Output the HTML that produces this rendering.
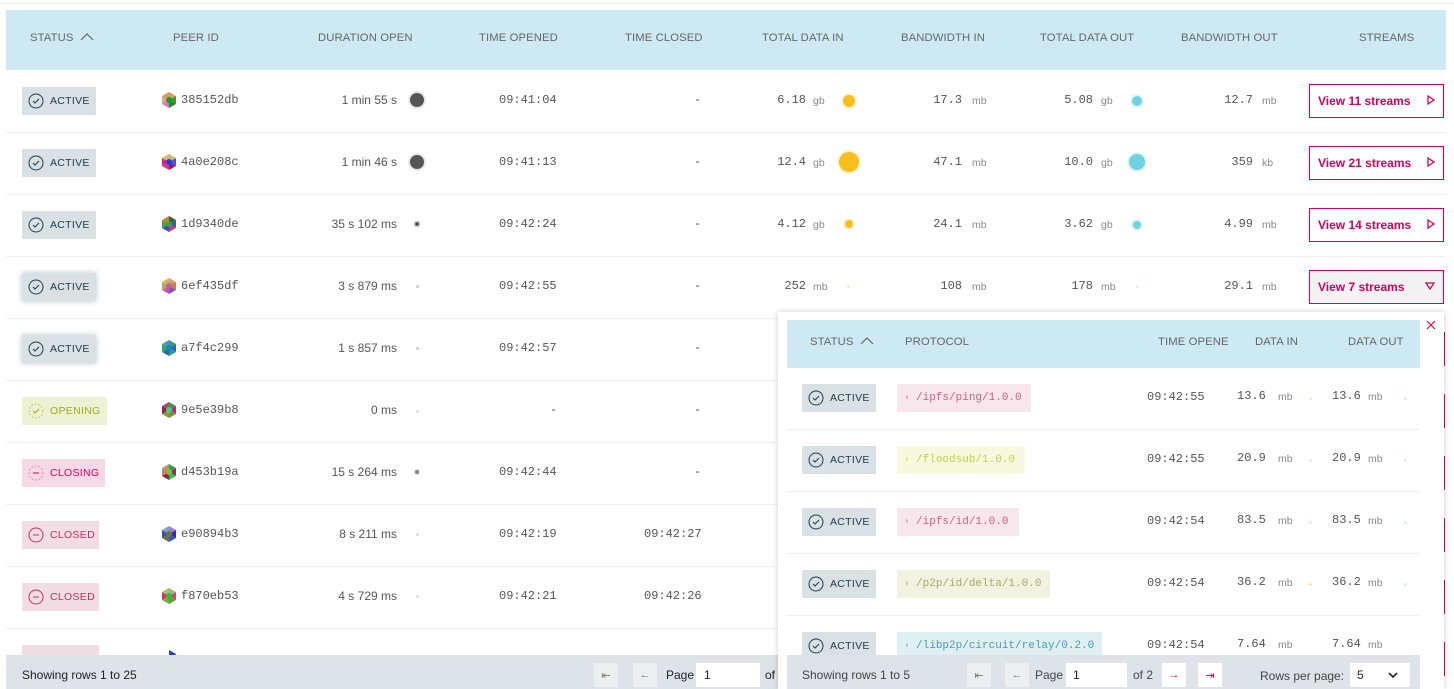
<!DOCTYPE html>
<html><head><meta charset="utf-8">
<style>
*{box-sizing:border-box;margin:0;padding:0}
body{width:1454px;height:689px;overflow:hidden;background:#fff;font-family:"Liberation Sans",sans-serif;position:relative;color:#555}
.a{position:absolute;white-space:nowrap}
.h{font-size:11.3px;color:#666;letter-spacing:.1px}
.r{text-align:right;width:200px}
.m{font-family:"Liberation Mono",monospace;font-size:12px;color:#555}
.u{font-size:10.5px;color:#888}
.s{font-size:12px;color:#555}
.line{position:absolute;height:1px;background:#eef0f2}
.badge{position:absolute;height:28px;font-size:10.5px;display:flex;align-items:center;padding-left:6px;letter-spacing:.3px}
.badge svg{margin-right:6px}
.act{background:#d9e1e5;color:#1e3a4a}
.dot{position:absolute;border-radius:50%}
.btn{position:absolute;left:1309px;width:135px;height:34px;border:1px solid #d5005d;color:#d5005d;font-size:12px;font-weight:bold;display:flex;align-items:center;padding-left:8px}
.btn span{position:absolute;right:8px;font-size:11px;font-weight:normal}
.tag{position:absolute;height:28px;font-family:"Liberation Mono",monospace;font-size:11px;display:flex;align-items:center;padding-left:7px}
.tag i{font-style:normal;margin-right:6px;font-size:10px}
.pb{position:absolute;width:24px;height:24px;background:#eceef0;font-size:11px;display:flex;align-items:center;justify-content:center;color:#777}
</style></head><body>
<div class="line" style="left:0;top:3px;width:1454px;background:#eee"></div>
<div class="a" style="left:6px;top:10px;width:1440px;height:60px;background:#cde9f3"></div>
<div class="a h" style="left:30px;top:32px">STATUS <svg width="14" height="9" style="margin-left:3px"><path d="M1 8L7 2L13 8" fill="none" stroke="#666" stroke-width="1.2"/></svg></div>
<div class="a h" style="left:173px;top:32px">PEER ID</div>
<div class="a h" style="left:318px;top:32px">DURATION OPEN</div>
<div class="a h" style="left:479px;top:32px">TIME OPENED</div>
<div class="a h" style="left:625px;top:32px">TIME CLOSED</div>
<div class="a h" style="left:762px;top:32px">TOTAL DATA IN</div>
<div class="a h" style="left:901px;top:32px">BANDWIDTH IN</div>
<div class="a h" style="left:1040px;top:32px">TOTAL DATA OUT</div>
<div class="a h" style="left:1181px;top:32px">BANDWIDTH OUT</div>
<div class="a h" style="left:1359px;top:32px">STREAMS</div>

<div class="line" style="left:6px;top:132px;width:1440px"></div>
<div class="line" style="left:6px;top:194px;width:1440px"></div>
<div class="line" style="left:6px;top:256px;width:1440px"></div>
<div class="line" style="left:6px;top:318px;width:1440px"></div>
<div class="line" style="left:6px;top:380px;width:1440px"></div>
<div class="line" style="left:6px;top:442px;width:1440px"></div>
<div class="line" style="left:6px;top:504px;width:1440px"></div>
<div class="line" style="left:6px;top:566px;width:1440px"></div>
<div class="line" style="left:6px;top:628px;width:1440px"></div>

<div class="badge act" style="left:22px;top:87px;width:74px"><svg width="16" height="16"><circle cx="8" cy="8" r="7" fill="none" stroke="#1e3a4a"/><path d="M5 8l2 2 4-4" fill="none" stroke="#1e3a4a"/></svg>ACTIVE</div>
<div class="badge act" style="left:22px;top:149px;width:74px"><svg width="16" height="16"><circle cx="8" cy="8" r="7" fill="none" stroke="#1e3a4a"/><path d="M5 8l2 2 4-4" fill="none" stroke="#1e3a4a"/></svg>ACTIVE</div>
<div class="badge act" style="left:22px;top:211px;width:74px"><svg width="16" height="16"><circle cx="8" cy="8" r="7" fill="none" stroke="#1e3a4a"/><path d="M5 8l2 2 4-4" fill="none" stroke="#1e3a4a"/></svg>ACTIVE</div>
<div class="badge act" style="left:22px;top:273px;width:74px;box-shadow:0 0 6px #b8c4cc"><svg width="16" height="16"><circle cx="8" cy="8" r="7" fill="none" stroke="#1e3a4a"/><path d="M5 8l2 2 4-4" fill="none" stroke="#1e3a4a"/></svg>ACTIVE</div>
<div class="badge act" style="left:22px;top:335px;width:74px;box-shadow:0 0 6px #b8c4cc"><svg width="16" height="16"><circle cx="8" cy="8" r="7" fill="none" stroke="#1e3a4a"/><path d="M5 8l2 2 4-4" fill="none" stroke="#1e3a4a"/></svg>ACTIVE</div>
<div class="badge" style="left:22px;top:397px;width:85px;background:#eef2d5;color:#9aad10"><svg width="16" height="16"><circle cx="8" cy="8" r="7" fill="none" stroke="#b5c040" stroke-dasharray="1.5 2"/><path d="M5 8l2 2 4-4" fill="none" stroke="#9aad10"/></svg>OPENING</div>
<div class="badge" style="left:22px;top:459px;width:83px;background:#f7d9e6;color:#d5005d"><svg width="16" height="16"><circle cx="8" cy="8" r="7" fill="none" stroke="#e07aa5" stroke-dasharray="1.5 2"/><path d="M5 8h6" stroke="#d5005d"/></svg>CLOSING</div>
<div class="badge" style="left:22px;top:521px;width:77px;background:#f3dde5;color:#c0305f"><svg width="16" height="16"><circle cx="8" cy="8" r="7" fill="none" stroke="#c0305f"/><path d="M5 8h6" stroke="#c0305f"/></svg>CLOSED</div>
<div class="badge" style="left:22px;top:583px;width:77px;background:#f3dde5;color:#c0305f"><svg width="16" height="16"><circle cx="8" cy="8" r="7" fill="none" stroke="#c0305f"/><path d="M5 8h6" stroke="#c0305f"/></svg>CLOSED</div>
<div class="badge" style="left:22px;top:645px;width:77px;background:#f3dde5;color:#c0305f"></div>

<div class="a" style="left:161px;top:92px"><svg width="16" height="16"><path d="M8 8L8 0L15 4Z" fill="#d4a060"/><path d="M8 8L15 4L15 12Z" fill="#3a9a30"/><path d="M8 8L15 12L8 16Z" fill="#2a8a20"/><path d="M8 8L8 16L1 12Z" fill="#e070d0"/><path d="M8 8L1 12L1 4Z" fill="#e8a080"/><path d="M8 8L1 4L8 0Z" fill="#c0a070"/><circle cx="8" cy="8" r="3" fill="#1a9a30"/></svg></div>
<div class="a m" style="left:181px;top:93px">385152db</div>
<div class="a" style="left:161px;top:154px"><svg width="16" height="16"><path d="M8 8L8 0L15 4Z" fill="#c8c060"/><path d="M8 8L15 4L15 12Z" fill="#5050d0"/><path d="M8 8L15 12L8 16Z" fill="#902050"/><path d="M8 8L8 16L1 12Z" fill="#e030a0"/><path d="M8 8L1 12L1 4Z" fill="#e02080"/><path d="M8 8L1 4L8 0Z" fill="#d0c060"/><circle cx="8" cy="8" r="3" fill="#2040e0"/></svg></div>
<div class="a m" style="left:181px;top:155px">4a0e208c</div>
<div class="a" style="left:161px;top:216px"><svg width="16" height="16"><path d="M8 8L8 0L15 4Z" fill="#2a6a30"/><path d="M8 8L15 4L15 12Z" fill="#5050b0"/><path d="M8 8L15 12L8 16Z" fill="#c04080"/><path d="M8 8L8 16L1 12Z" fill="#3050d0"/><path d="M8 8L1 12L1 4Z" fill="#50a040"/><path d="M8 8L1 4L8 0Z" fill="#d08030"/><circle cx="8" cy="8" r="3" fill="#40a040"/></svg></div>
<div class="a m" style="left:181px;top:217px">1d9340de</div>
<div class="a" style="left:161px;top:278px"><svg width="16" height="16"><path d="M8 8L8 0L15 4Z" fill="#d0a070"/><path d="M8 8L15 4L15 12Z" fill="#e07050"/><path d="M8 8L15 12L8 16Z" fill="#8050c0"/><path d="M8 8L8 16L1 12Z" fill="#d050b0"/><path d="M8 8L1 12L1 4Z" fill="#c0a060"/><path d="M8 8L1 4L8 0Z" fill="#e0b060"/><circle cx="8" cy="8" r="3" fill="#a07090"/></svg></div>
<div class="a m" style="left:181px;top:279px">6ef435df</div>
<div class="a" style="left:161px;top:340px"><svg width="16" height="16"><path d="M8 8L8 0L15 4Z" fill="#30a060"/><path d="M8 8L15 4L15 12Z" fill="#4060c0"/><path d="M8 8L15 12L8 16Z" fill="#20a080"/><path d="M8 8L8 16L1 12Z" fill="#3060c0"/><path d="M8 8L1 12L1 4Z" fill="#20b060"/><path d="M8 8L1 4L8 0Z" fill="#5090c0"/><circle cx="8" cy="8" r="3" fill="#2080c0"/></svg></div>
<div class="a m" style="left:181px;top:341px">a7f4c299</div>
<div class="a" style="left:161px;top:402px"><svg width="16" height="16"><path d="M8 8L8 0L15 4Z" fill="#30a050"/><path d="M8 8L15 4L15 12Z" fill="#d02080"/><path d="M8 8L15 12L8 16Z" fill="#6a9a30"/><path d="M8 8L8 16L1 12Z" fill="#8a9a30"/><path d="M8 8L1 12L1 4Z" fill="#902050"/><path d="M8 8L1 4L8 0Z" fill="#c04060"/><circle cx="8" cy="8" r="3" fill="#40d080"/></svg></div>
<div class="a m" style="left:181px;top:403px">9e5e39b8</div>
<div class="a" style="left:161px;top:464px"><svg width="16" height="16"><path d="M8 8L8 0L15 4Z" fill="#30a050"/><path d="M8 8L15 4L15 12Z" fill="#8a3060"/><path d="M8 8L15 12L8 16Z" fill="#30c040"/><path d="M8 8L8 16L1 12Z" fill="#902040"/><path d="M8 8L1 12L1 4Z" fill="#c08070"/><path d="M8 8L1 4L8 0Z" fill="#c09070"/><circle cx="8" cy="8" r="3" fill="#80c030"/></svg></div>
<div class="a m" style="left:181px;top:465px">d453b19a</div>
<div class="a" style="left:161px;top:526px"><svg width="16" height="16"><path d="M8 8L8 0L15 4Z" fill="#a080d0"/><path d="M8 8L15 4L15 12Z" fill="#3030a0"/><path d="M8 8L15 12L8 16Z" fill="#3050e0"/><path d="M8 8L8 16L1 12Z" fill="#6a7a30"/><path d="M8 8L1 12L1 4Z" fill="#3050c0"/><path d="M8 8L1 4L8 0Z" fill="#80a0d0"/><circle cx="8" cy="8" r="3" fill="#6a7a20"/></svg></div>
<div class="a m" style="left:181px;top:527px">e90894b3</div>
<div class="a" style="left:161px;top:588px"><svg width="16" height="16"><path d="M8 8L8 0L15 4Z" fill="#90c070"/><path d="M8 8L15 4L15 12Z" fill="#e04070"/><path d="M8 8L15 12L8 16Z" fill="#60a030"/><path d="M8 8L8 16L1 12Z" fill="#70b040"/><path d="M8 8L1 12L1 4Z" fill="#e03050"/><path d="M8 8L1 4L8 0Z" fill="#a0c080"/><circle cx="8" cy="8" r="3" fill="#20c040"/></svg></div>
<div class="a m" style="left:181px;top:589px">f870eb53</div>
<div class="a" style="left:161px;top:650px"><svg width="16" height="16"><path d="M8 8L8 0L15 4Z" fill="#3040b0"/><path d="M8 8L15 4L15 12Z" fill="#4050c0"/><circle cx="8" cy="8" r="3" fill="#3050d0"/></svg></div>

<div class="a s r" style="left:197px;top:93px">1 min 55 s</div>
<div class="a s r" style="left:197px;top:155px">1 min 46 s</div>
<div class="a s r" style="left:197px;top:217px">35 s 102 ms</div>
<div class="a s r" style="left:197px;top:279px">3 s 879 ms</div>
<div class="a s r" style="left:197px;top:341px">1 s 857 ms</div>
<div class="a s r" style="left:197px;top:403px">0 ms</div>
<div class="a s r" style="left:197px;top:465px">15 s 264 ms</div>
<div class="a s r" style="left:197px;top:527px">8 s 211 ms</div>
<div class="a s r" style="left:197px;top:589px">4 s 729 ms</div>
<div class="dot" style="left:410px;top:93px;width:14px;height:14px;background:#555;box-shadow:0 0 0 2px #e8e8e8"></div>
<div class="dot" style="left:410px;top:155px;width:14px;height:14px;background:#555;box-shadow:0 0 0 2px #e8e8e8"></div>
<div class="dot" style="left:415px;top:222px;width:4px;height:4px;background:#555;box-shadow:0 0 0 2px #e4e4e4"></div>
<div class="dot" style="left:416px;top:285px;width:3px;height:3px;background:#ccc"></div>
<div class="dot" style="left:416px;top:347px;width:3px;height:3px;background:#ccc"></div>
<div class="dot" style="left:416px;top:410px;width:3px;height:3px;background:#ddd"></div>
<div class="dot" style="left:415px;top:470px;width:4px;height:4px;background:#888;box-shadow:0 0 0 1px #ddd"></div>
<div class="dot" style="left:416px;top:533px;width:3px;height:3px;background:#ddd"></div>
<div class="dot" style="left:416px;top:595px;width:3px;height:3px;background:#ddd"></div>

<div class="a m" style="left:499px;top:93px">09:41:04</div>
<div class="a m" style="left:499px;top:155px">09:41:13</div>
<div class="a m" style="left:499px;top:217px">09:42:24</div>
<div class="a m" style="left:499px;top:279px">09:42:55</div>
<div class="a m" style="left:499px;top:341px">09:42:57</div>
<div class="a m" style="left:550px;top:403px">-</div>
<div class="a m" style="left:499px;top:465px">09:42:44</div>
<div class="a m" style="left:499px;top:527px">09:42:19</div>
<div class="a m" style="left:499px;top:589px">09:42:21</div>
<div class="a m" style="left:694px;top:93px">-</div>
<div class="a m" style="left:694px;top:155px">-</div>
<div class="a m" style="left:694px;top:217px">-</div>
<div class="a m" style="left:694px;top:279px">-</div>
<div class="a m" style="left:694px;top:341px">-</div>
<div class="a m" style="left:694px;top:403px">-</div>
<div class="a m" style="left:694px;top:465px">-</div>
<div class="a m" style="left:644px;top:527px">09:42:27</div>
<div class="a m" style="left:644px;top:589px">09:42:26</div>

<div class="a m r" style="left:606px;top:93px">6.18</div><div class="a u" style="left:813px;top:95px">gb</div>
<div class="a m r" style="left:606px;top:155px">12.4</div><div class="a u" style="left:813px;top:157px">gb</div>
<div class="a m r" style="left:606px;top:217px">4.12</div><div class="a u" style="left:813px;top:219px">gb</div>
<div class="a m r" style="left:606px;top:279px">252</div><div class="a u" style="left:813px;top:281px">mb</div>
<div class="dot" style="left:843px;top:95px;width:12px;height:12px;background:#f8be1c;box-shadow:0 0 0 2px #fdf3d6"></div>
<div class="dot" style="left:839px;top:152px;width:20px;height:20px;background:#f8be1c;box-shadow:0 0 0 2px #fdf3d6"></div>
<div class="dot" style="left:845px;top:220px;width:8px;height:8px;background:#f8be1c;box-shadow:0 0 0 2px #fdf3d6"></div>
<div class="dot" style="left:847px;top:285px;width:3px;height:3px;background:#fbe7b0"></div>

<div class="a m r" style="left:762px;top:93px">17.3</div><div class="a u" style="left:972px;top:95px">mb</div>
<div class="a m r" style="left:762px;top:155px">47.1</div><div class="a u" style="left:972px;top:157px">mb</div>
<div class="a m r" style="left:762px;top:217px">24.1</div><div class="a u" style="left:972px;top:219px">mb</div>
<div class="a m r" style="left:762px;top:279px">108</div><div class="a u" style="left:972px;top:281px">mb</div>

<div class="a m r" style="left:893px;top:93px">5.08</div><div class="a u" style="left:1101px;top:95px">gb</div>
<div class="a m r" style="left:893px;top:155px">10.0</div><div class="a u" style="left:1101px;top:157px">gb</div>
<div class="a m r" style="left:893px;top:217px">3.62</div><div class="a u" style="left:1101px;top:219px">gb</div>
<div class="a m r" style="left:893px;top:279px">178</div><div class="a u" style="left:1101px;top:281px">mb</div>
<div class="dot" style="left:1132px;top:96px;width:10px;height:10px;background:#6fd2e3;box-shadow:0 0 0 2px #e0f5f9"></div>
<div class="dot" style="left:1129px;top:154px;width:16px;height:16px;background:#6fd2e3;box-shadow:0 0 0 2px #e0f5f9"></div>
<div class="dot" style="left:1133px;top:221px;width:8px;height:8px;background:#6fd2e3;box-shadow:0 0 0 2px #e0f5f9"></div>
<div class="dot" style="left:1136px;top:285px;width:3px;height:3px;background:#d8f0f5"></div>

<div class="a m r" style="left:1053px;top:93px">12.7</div><div class="a u" style="left:1262px;top:95px">mb</div>
<div class="a m r" style="left:1053px;top:155px">359</div><div class="a u" style="left:1262px;top:157px">kb</div>
<div class="a m r" style="left:1053px;top:217px">4.99</div><div class="a u" style="left:1262px;top:219px">mb</div>
<div class="a m r" style="left:1053px;top:279px">29.1</div><div class="a u" style="left:1262px;top:281px">mb</div>

<div class="btn" style="top:84px">View 11 streams<span><svg width="8" height="10"><path d="M1 1L7 5L1 9Z" fill="none" stroke="#d5005d" stroke-width="1.3"/></svg></span></div>
<div class="btn" style="top:146px">View 21 streams<span><svg width="8" height="10"><path d="M1 1L7 5L1 9Z" fill="none" stroke="#d5005d" stroke-width="1.3"/></svg></span></div>
<div class="btn" style="top:208px">View 14 streams<span><svg width="8" height="10"><path d="M1 1L7 5L1 9Z" fill="none" stroke="#d5005d" stroke-width="1.3"/></svg></span></div>
<div class="btn" style="top:270px;background:#f2f2f2">View 7 streams<span><svg width="10" height="8"><path d="M1 1L9 1L5 7Z" fill="none" stroke="#d5005d" stroke-width="1.3"/></svg></span></div>
<div class="a" style="left:1443px;top:332px;width:2px;height:34px;background:#d5005d"></div>
<div class="a" style="left:1443px;top:394px;width:2px;height:34px;background:#d5005d"></div>
<div class="a" style="left:1443px;top:456px;width:2px;height:34px;background:#d5005d"></div>
<div class="a" style="left:1443px;top:518px;width:2px;height:34px;background:#d5005d"></div>
<div class="a" style="left:1443px;top:580px;width:2px;height:34px;background:#d5005d"></div>
<div class="a" style="left:1443px;top:642px;width:2px;height:34px;background:#d5005d"></div>

<div class="a" style="left:6px;top:655px;width:780px;height:34px;background:#dde3e8"></div>
<div class="a" style="left:22px;top:668px;font-size:12px;color:#222">Showing rows 1 to 25</div>
<div class="pb" style="left:594px;top:663px">⇤</div>
<div class="pb" style="left:633px;top:663px">←</div>
<div class="a" style="left:666px;top:668px;font-size:12px;color:#222">Page</div>
<div class="a" style="left:696px;top:663px;width:64px;height:24px;background:#fff;font-size:12px;color:#222;padding:5px 8px">1</div>
<div class="a" style="left:765px;top:668px;font-size:12px;color:#222">of</div>

<div class="a" style="left:778px;top:312px;width:666px;height:377px;background:#fff;box-shadow:0 0 6px rgba(0,0,0,.2)"></div>
<div class="a" style="left:1426px;top:317px"><svg width="10" height="10"><path d="M1 1L9 9M9 1L1 9" stroke="#d5005d" stroke-width="1.1"/></svg></div>
<div class="a" style="left:787px;top:320px;width:633px;height:48px;background:#cde9f3"></div>
<div class="a h" style="left:810px;top:336px">STATUS <svg width="14" height="9" style="margin-left:3px"><path d="M1 8L7 2L13 8" fill="none" stroke="#666" stroke-width="1.2"/></svg></div>
<div class="a h" style="left:905px;top:336px">PROTOCOL</div>
<div class="a h" style="left:1158px;top:336px">TIME OPENE</div>
<div class="a h" style="left:1255px;top:336px">DATA IN</div>
<div class="a h" style="left:1348px;top:336px">DATA OUT</div>
<div class="line" style="left:787px;top:429px;width:633px"></div>
<div class="line" style="left:787px;top:491px;width:633px"></div>
<div class="line" style="left:787px;top:553px;width:633px"></div>
<div class="line" style="left:787px;top:615px;width:633px"></div>

<div class="badge act" style="left:802px;top:384px;width:74px"><svg width="16" height="16"><circle cx="8" cy="8" r="7" fill="none" stroke="#1e3a4a"/><path d="M5 8l2 2 4-4" fill="none" stroke="#1e3a4a"/></svg>ACTIVE</div>
<div class="badge act" style="left:802px;top:446px;width:74px"><svg width="16" height="16"><circle cx="8" cy="8" r="7" fill="none" stroke="#1e3a4a"/><path d="M5 8l2 2 4-4" fill="none" stroke="#1e3a4a"/></svg>ACTIVE</div>
<div class="badge act" style="left:802px;top:508px;width:74px"><svg width="16" height="16"><circle cx="8" cy="8" r="7" fill="none" stroke="#1e3a4a"/><path d="M5 8l2 2 4-4" fill="none" stroke="#1e3a4a"/></svg>ACTIVE</div>
<div class="badge act" style="left:802px;top:570px;width:74px"><svg width="16" height="16"><circle cx="8" cy="8" r="7" fill="none" stroke="#1e3a4a"/><path d="M5 8l2 2 4-4" fill="none" stroke="#1e3a4a"/></svg>ACTIVE</div>
<div class="badge act" style="left:802px;top:632px;width:74px"><svg width="16" height="16"><circle cx="8" cy="8" r="7" fill="none" stroke="#1e3a4a"/><path d="M5 8l2 2 4-4" fill="none" stroke="#1e3a4a"/></svg>ACTIVE</div>

<div class="tag" style="left:897px;top:384px;width:134px;background:#f7e6ec;color:#d0607f"><i style="color:#eaaabc">◗</i>/ipfs/ping/1.0.0</div>
<div class="tag" style="left:897px;top:446px;width:128px;background:#f6f9dd;color:#c0d050"><i style="color:#dde6a0">◗</i>/floodsub/1.0.0</div>
<div class="tag" style="left:897px;top:508px;width:122px;background:#f7e6ec;color:#d0607f"><i style="color:#eaaabc">◗</i>/ipfs/id/1.0.0</div>
<div class="tag" style="left:897px;top:570px;width:153px;background:#f1f2e0;color:#a8a860"><i style="color:#cfd0a0">◗</i>/p2p/id/delta/1.0.0</div>
<div class="tag" style="left:897px;top:632px;width:205px;background:#dff0f3;color:#4a9ab0"><i style="color:#a0d0dd">◗</i>/libp2p/circuit/relay/0.2.0</div>

<div class="a m" style="left:1147px;top:390px">09:42:55</div>
<div class="a m" style="left:1147px;top:452px">09:42:55</div>
<div class="a m" style="left:1147px;top:514px">09:42:54</div>
<div class="a m" style="left:1147px;top:576px">09:42:54</div>
<div class="a m" style="left:1147px;top:638px">09:42:54</div>

<div class="a m" style="left:1237px;top:389px">13.6</div><div class="a u" style="left:1278px;top:391px">mb</div>
<div class="a m" style="left:1237px;top:451px">20.9</div><div class="a u" style="left:1278px;top:453px">mb</div>
<div class="a m" style="left:1237px;top:513px">83.5</div><div class="a u" style="left:1278px;top:515px">mb</div>
<div class="a m" style="left:1237px;top:575px">36.2</div><div class="a u" style="left:1278px;top:577px">mb</div>
<div class="a m" style="left:1237px;top:637px">7.64</div><div class="a u" style="left:1278px;top:639px">mb</div>
<div class="a m" style="left:1332px;top:389px">13.6</div><div class="a u" style="left:1368px;top:391px">mb</div>
<div class="a m" style="left:1332px;top:451px">20.9</div><div class="a u" style="left:1368px;top:453px">mb</div>
<div class="a m" style="left:1332px;top:513px">83.5</div><div class="a u" style="left:1368px;top:515px">mb</div>
<div class="a m" style="left:1332px;top:575px">36.2</div><div class="a u" style="left:1368px;top:577px">mb</div>
<div class="a m" style="left:1332px;top:637px">7.64</div><div class="a u" style="left:1368px;top:639px">mb</div>
<div class="dot" style="left:1309px;top:397px;width:3px;height:3px;background:#fbe7b0"></div>
<div class="dot" style="left:1309px;top:459px;width:3px;height:3px;background:#fbe7b0"></div>
<div class="dot" style="left:1309px;top:521px;width:3px;height:3px;background:#fbe7b0"></div>
<div class="dot" style="left:1309px;top:583px;width:3px;height:3px;background:#fbe7b0"></div>
<div class="dot" style="left:1404px;top:397px;width:3px;height:3px;background:#d8f0f5"></div>
<div class="dot" style="left:1404px;top:459px;width:3px;height:3px;background:#d8f0f5"></div>
<div class="dot" style="left:1404px;top:521px;width:3px;height:3px;background:#d8f0f5"></div>
<div class="dot" style="left:1404px;top:583px;width:3px;height:3px;background:#d8f0f5"></div>

<div class="a" style="left:787px;top:655px;width:633px;height:34px;background:#dde3e8"></div>
<div class="a" style="left:802px;top:668px;font-size:12px;color:#444">Showing rows 1 to 5</div>
<div class="pb" style="left:967px;top:663px">⇤</div>
<div class="pb" style="left:1005px;top:663px">←</div>
<div class="a" style="left:1035px;top:668px;font-size:12px;color:#444">Page</div>
<div class="a" style="left:1066px;top:663px;width:61px;height:24px;background:#fff;font-size:12px;color:#222;padding:5px 7px">1</div>
<div class="a" style="left:1133px;top:668px;font-size:12px;color:#444">of 2</div>
<div class="pb" style="left:1162px;top:663px;background:#fff;color:#d5005d">→</div>
<div class="pb" style="left:1198px;top:663px;background:#fff;color:#d5005d">⇥</div>
<div class="a" style="left:1260px;top:669px;font-size:12px;color:#444">Rows per page:</div>
<div class="a" style="left:1350px;top:663px;width:60px;height:24px;background:#fff;font-size:12px;color:#222;padding:5px 7px">5<svg width="10" height="7" style="position:absolute;right:12px;top:9px"><path d="M1 1L5 5L9 1" fill="none" stroke="#222" stroke-width="1.6"/></svg></div>
</body></html>
